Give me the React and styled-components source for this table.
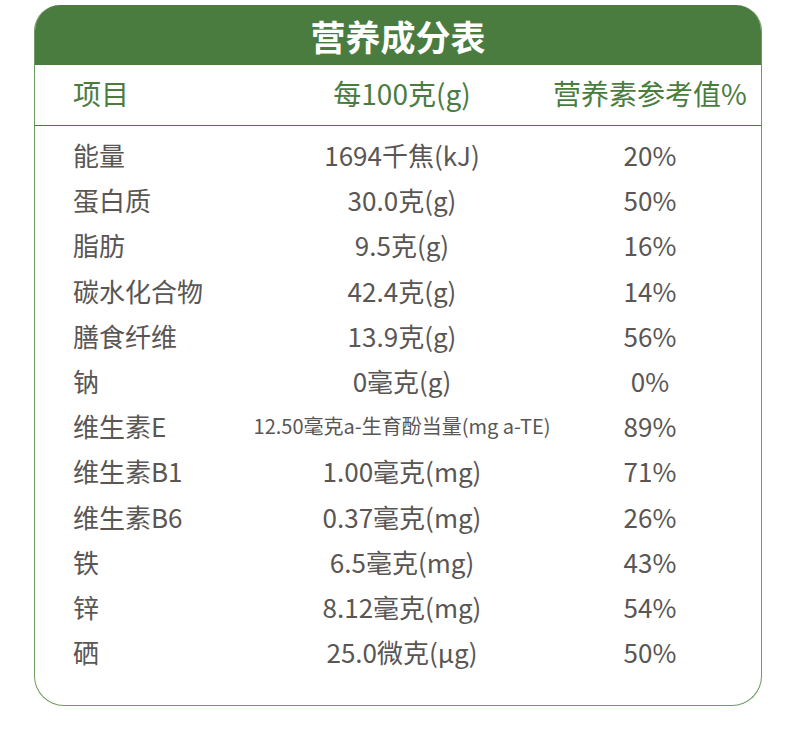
import styled, { createGlobalStyle } from "styled-components";

const GlobalStyle = createGlobalStyle`
  html, body {
    margin: 0;
    padding: 0;
    background: #fff;
  }
  body {
    font-family: "Noto Sans CJK SC", "Noto Sans", sans-serif;
  }
`;

const green = "#4a7c40";

const rows = [
  ["能量", "1694千焦(kJ)", "20%"],
  ["蛋白质", "30.0克(g)", "50%"],
  ["脂肪", "9.5克(g)", "16%"],
  ["碳水化合物", "42.4克(g)", "14%"],
  ["膳食纤维", "13.9克(g)", "56%"],
  ["钠", "0毫克(g)", "0%"],
  ["维生素E", "12.50毫克a-生育酚当量(mg a-TE)", "89%", true],
  ["维生素B1", "1.00毫克(mg)", "71%"],
  ["维生素B6", "0.37毫克(mg)", "26%"],
  ["铁", "6.5毫克(mg)", "43%"],
  ["锌", "8.12毫克(mg)", "54%"],
  ["硒", "25.0微克(μg)", "50%"],
];

const Page = styled.div`
  padding: 5px 0 0 34px;
`;

const Card = styled.div`
  width: 728px;
  height: 701px;
  box-sizing: border-box;
  border: 1.5px solid #6f9963;
  border-top: none;
  border-radius: 26px 26px 30px 30px;
  overflow: hidden;
  display: flex;
  flex-direction: column;
`;

const Title = styled.div`
  height: 60px;
  background: ${green};
  color: #fff;
  font-size: 35px;
  font-weight: 700;
  display: flex;
  align-items: center;
  justify-content: center;
`;

const Grid = styled.div`
  display: grid;
  grid-template-columns: 217px 224px 26px 220px;
  padding-left: 38px;
`;

const HeadRow = styled(Grid)`
  height: 61px;
  box-sizing: border-box;
  padding-bottom: 4px;
  border-bottom: 1.5px solid ${green};
  color: ${green};
  font-size: 28px;
  align-items: center;
`;

const Body = styled.div`
  padding-top: 6px;
`;

const Row = styled(Grid)`
  height: 45.2px;
  align-items: center;
  color: #595654;
  font-size: 26px;
`;

const Cell = styled.div`
  grid-column: ${(p) => p.$col};
  text-align: ${(p) => (p.$center ? "center" : "left")};
  white-space: nowrap;
  font-size: ${(p) => (p.$small ? "20px" : "inherit")};
  margin: ${(p) => (p.$small ? "0 -40px" : "0")};
`;

export default function App() {
  return (
    <>
      <GlobalStyle />
      <Page>
        <Card>
          <Title>营养成分表</Title>
          <HeadRow>
            <Cell $col={1}>项目</Cell>
            <Cell $col={2} $center>
              每100克(g)
            </Cell>
            <Cell $col={4} $center>
              营养素参考值%
            </Cell>
          </HeadRow>
          <Body>
            {rows.map(([name, amount, pct, small]) => (
              <Row key={name}>
                <Cell $col={1}>{name}</Cell>
                <Cell $col={2} $center $small={small}>
                  {amount}
                </Cell>
                <Cell $col={4} $center>
                  {pct}
                </Cell>
              </Row>
            ))}
          </Body>
        </Card>
      </Page>
    </>
  );
}
